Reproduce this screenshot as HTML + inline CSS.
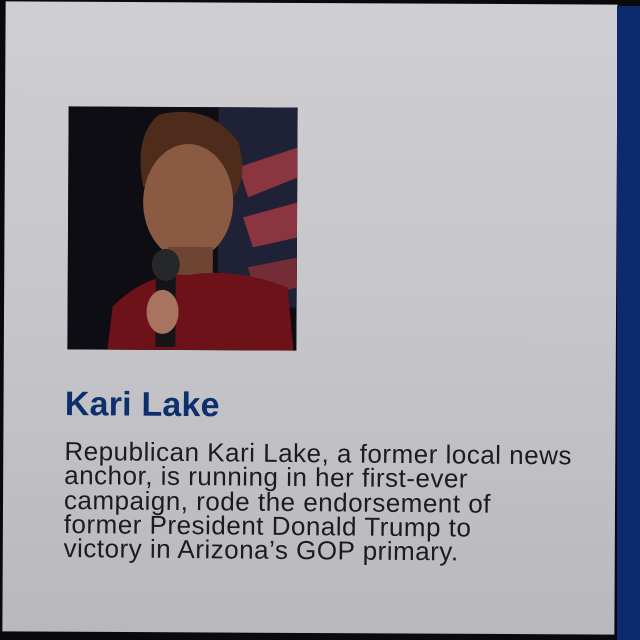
<!DOCTYPE html>
<html><head><meta charset="utf-8"><style>
html,body{margin:0;padding:0;width:640px;height:640px;overflow:hidden;background:#0a0a0c;}
.card{position:absolute;left:4px;top:3px;width:612px;height:630px;background:linear-gradient(180deg,#cfcfd3 0%,#c6c6ca 50%,#b9b9bd 100%);transform:rotate(0.3deg);}
.blue{position:absolute;left:617px;top:6px;width:23px;height:634px;background:#0d2a6e;}
.photo{position:absolute;left:68px;top:107px;width:229px;height:243px;overflow:hidden;background:#0d0c12;transform:rotate(0.3deg);}
.txt{position:absolute;left:65px;top:385px;width:560px;font-family:"Liberation Sans",sans-serif;transform:rotate(0.5deg);transform-origin:0 0;white-space:nowrap;}
h1{margin:0;font-size:34px;font-weight:bold;color:#0e2f6e;letter-spacing:0.2px;}
p{margin:15px 0 0;font-size:26px;line-height:24.3px;color:#1c1c1e;letter-spacing:0.5px;}
</style></head><body>
<div class="card"></div>
<div class="blue"></div>
<div class="photo">
<svg width="229" height="243" viewBox="0 0 229 243">
<rect width="229" height="243" fill="#0e0d14"/>
<rect x="150" y="0" width="79" height="200" fill="#1f2236"/>
<path d="M170 60 L229 40 L229 70 L180 90Z" fill="#8a3540"/>
<path d="M175 110 L229 95 L229 130 L185 140Z" fill="#8a3540"/>
<path d="M180 160 L229 150 L229 180 L190 190Z" fill="#742c36"/>
<path d="M90 8 Q140 -5 170 35 Q180 70 165 90 L75 80 Q65 30 90 8Z" fill="#4e2c1c"/>
<ellipse cx="120" cy="95" rx="45" ry="58" fill="#8a5a42"/>
<rect x="100" y="140" width="45" height="30" fill="#6e4432"/>
<path d="M40 243 L45 200 Q80 165 120 168 Q170 160 220 180 L226 243Z" fill="#6e1219"/>
<rect x="88" y="150" width="20" height="90" fill="#151518"/>
<ellipse cx="98" cy="158" rx="14" ry="16" fill="#25272b"/>
<ellipse cx="95" cy="205" rx="16" ry="22" fill="#a87460"/>
</svg>
</div>
<div class="txt">
<h1>Kari Lake</h1>
<p>Republican Kari Lake, a former local news<br>anchor, is running in her first-ever<br>campaign, rode the endorsement of<br>former President Donald Trump to<br>victory in Arizona’s GOP primary.</p>
</div>
</body></html>
